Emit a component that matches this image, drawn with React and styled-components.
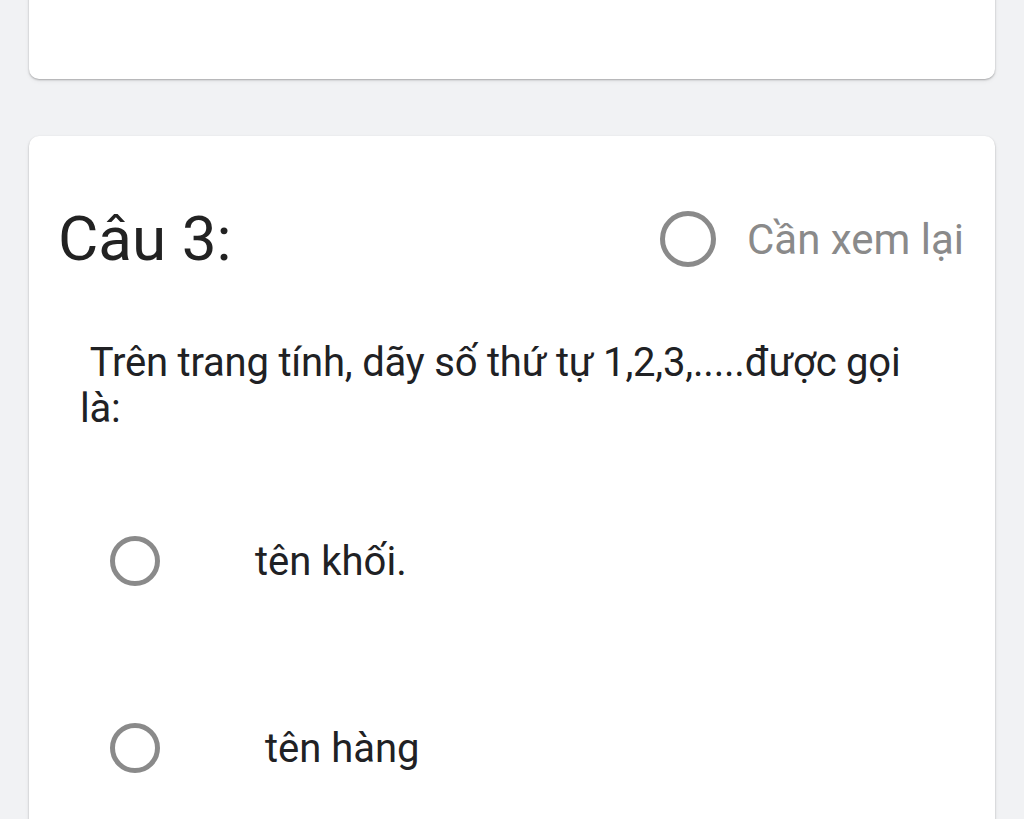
import React from 'react';
import styled, { createGlobalStyle } from 'styled-components';

const Global = createGlobalStyle`
  html {
    overflow: hidden;
    background: #f1f2f4;
  }
  body {
    margin: 0;
    padding: 0;
    background: #f1f2f4;
    font-family: Roboto, "Noto Sans", sans-serif;
  }
`;

const Page = styled.div`
  padding: 0 29px;
  display: flex;
  flex-direction: column;
  gap: 57px;
  margin-top: -20px;
`;

const Card = styled.section`
  background: #fff;
  border-radius: 10px;
  box-shadow: 0 1px 2px rgba(0, 0, 0, 0.28), 0 2px 5px rgba(0, 0, 0, 0.06);
  height: ${p => p.h || 'auto'};
  flex-shrink: 0;
`;

const QuestionCard = styled(Card)`
  padding: 68px 31px 40px 29px;
  min-height: 900px;
`;

const HeadRow = styled.div`
  display: flex;
  align-items: center;
  justify-content: space-between;
`;

const Title = styled.h2`
  margin: 0;
  font-weight: 400;
  font-size: 62px;
  line-height: 70px;
  color: #222;
`;

const Review = styled.label`
  display: flex;
  align-items: center;
  gap: 31px;
  font-size: 42px;
  color: #8a8a8a;
`;

const Ring = styled.span`
  width: ${p => p.size}px;
  height: ${p => p.size}px;
  box-sizing: border-box;
  border: 5px solid #8a8a8a;
  border-radius: 50%;
  flex-shrink: 0;
`;

const Question = styled.p`
  margin: 66px 0 0 22px;
  font-size: 40px;
  line-height: 46px;
  color: #202124;
  letter-spacing: -0.2px;
  max-width: 860px;
  white-space: pre-wrap;
`;

const Options = styled.div`
  display: flex;
  flex-direction: column;
  gap: 137px;
  margin-top: 104px;
  padding-left: 52px;
`;

const Option = styled.label`
  display: flex;
  align-items: center;
  gap: 95px;
  font-size: 40px;
  color: #202124;
  white-space: pre;
`;

export default function App() {
  return (
    <>
      <Global />
      <Page>
        <Card h="99px" />
        <QuestionCard>
          <HeadRow>
            <Title>Câu 3:</Title>
            <Review>
              <Ring size={56} />
              Cần xem lại
            </Review>
          </HeadRow>
          <Question>{' Trên trang tính, dãy số thứ tự 1,2,3,.....được gọi\nlà:'}</Question>
          <Options>
            <Option>
              <Ring size={50} />
              tên khối.
            </Option>
            <Option>
              <Ring size={50} />
              {' tên hàng'}
            </Option>
          </Options>
        </QuestionCard>
      </Page>
    </>
  );
}
